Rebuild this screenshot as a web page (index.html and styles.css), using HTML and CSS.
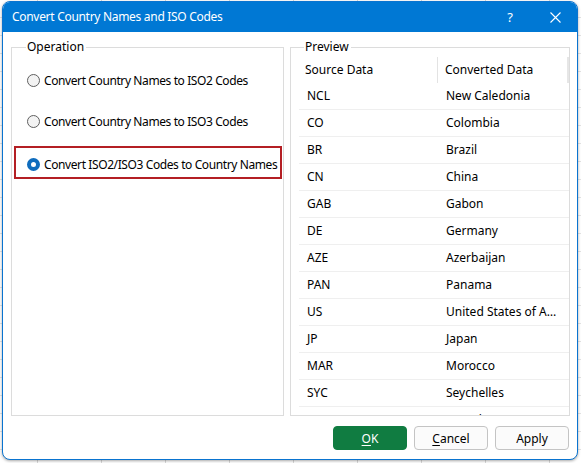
FILE: index.html
```html
<!DOCTYPE html>
<html>
<head>
<meta charset="utf-8">
<link rel="stylesheet" href="styles.css">
</head>
<body>
<div class="window">
  <div class="titlebar">
    <span class="title">Convert Country Names and ISO Codes</span>
    <span class="tb-btn help">?</span>
    <span class="tb-btn close"><svg width="11" height="11" viewBox="0 0 11 11"><path d="M0.5 0.5 L10.5 10.5 M10.5 0.5 L0.5 10.5" stroke="#fff" stroke-width="1.1" fill="none"/></svg></span>
  </div>
  <div class="body">
    <div class="groups">
      <div class="group operation">
        <span class="legend">Operation</span>
        <div class="options">
          <label class="option"><span class="radio"></span><span>Convert Country Names to ISO2 Codes</span></label>
          <label class="option"><span class="radio"></span><span>Convert Country Names to ISO3 Codes</span></label>
          <label class="option selected"><span class="radio checked"></span><span>Convert ISO2/ISO3 Codes to Country Names</span></label>
        </div>
      </div>
      <div class="group preview">
        <span class="legend">Preview</span>
        <div class="table">
          <div class="thead">
            <div class="th c1">Source Data</div>
            <div class="th c2">Converted Data</div>
          </div>
          <div class="tr"><div class="td c1">NCL</div><div class="td c2">New Caledonia</div></div>
          <div class="tr"><div class="td c1">CO</div><div class="td c2">Colombia</div></div>
          <div class="tr"><div class="td c1">BR</div><div class="td c2">Brazil</div></div>
          <div class="tr"><div class="td c1">CN</div><div class="td c2">China</div></div>
          <div class="tr"><div class="td c1">GAB</div><div class="td c2">Gabon</div></div>
          <div class="tr"><div class="td c1">DE</div><div class="td c2">Germany</div></div>
          <div class="tr"><div class="td c1">AZE</div><div class="td c2">Azerbaijan</div></div>
          <div class="tr"><div class="td c1">PAN</div><div class="td c2">Panama</div></div>
          <div class="tr"><div class="td c1">US</div><div class="td c2">United States of America</div></div>
          <div class="tr"><div class="td c1">JP</div><div class="td c2">Japan</div></div>
          <div class="tr"><div class="td c1">MAR</div><div class="td c2">Morocco</div></div>
          <div class="tr"><div class="td c1">SYC</div><div class="td c2">Seychelles</div></div>
          <div class="tr"><div class="td c1">CAN</div><div class="td c2">Canada</div></div>
        </div>
      </div>
    </div>
    <div class="buttons">
      <button class="btn primary"><u>O</u>K</button>
      <button class="btn"><u>C</u>ancel</button>
      <button class="btn">Apply</button>
    </div>
  </div>
</div>
</body>
</html>
```

FILE: styles.css
```css
html, body {
  margin: 0;
  padding: 0;
}
body {
  width: 581px;
  height: 463px;
  overflow: hidden;
  background-color: #ffffff;
  background-image:
    repeating-linear-gradient(to right, transparent 0, transparent 37px, #d9d9d9 37px, #d9d9d9 38px, transparent 38px, transparent 64px),
    repeating-linear-gradient(to bottom, transparent 0, transparent 17px, #e3e3e3 17px, #e3e3e3 18px);
  font-family: "Noto Sans", "Open Sans", sans-serif;
  font-size: 12px;
  color: #000;
}
.window {
  box-sizing: border-box;
  margin: 1px 0 0 2px;
  width: 576px;
  height: 459px;
  border: 1px solid #0a74d0;
  border-radius: 8px;
  background: #fff;
  overflow: hidden;
  box-shadow: 0 1px 3px rgba(0,0,0,0.35);
}
.titlebar {
  height: 30px;
  background: #0078d4;
  color: #fff;
  display: flex;
  align-items: center;
  padding-left: 9px;
}
.title {
  flex: 1;
  font-size: 12px;
  letter-spacing: -0.3px;
  padding-bottom: 1px;
}
.tb-btn {
  display: flex;
  align-items: center;
  justify-content: center;
  height: 30px;
}
.help {
  font-size: 13px;
  width: 46px;
  padding-bottom: 1px;
}
.close {
  width: 44px;
}
.body {
  padding: 15px 7px 0 8px;
}
.groups {
  display: flex;
  gap: 6px;
  height: 369px;
}
.group {
  position: relative;
  box-sizing: border-box;
  border: 1px solid #dcdcdc;
  height: 369px;
}
.legend {
  position: absolute;
  top: -9px;
  background: #fff;
  padding: 0 2px 0 1px;
  line-height: 16px;
  font-size: 12px;
}
.operation {
  width: 273px;
}
.operation .legend {
  left: 14px;
}
.preview {
  width: 280px;
}
.preview .legend {
  left: 13px;
}
.options {
  display: flex;
  flex-direction: column;
  gap: 8px;
  padding: 16px 1px 0 2px;
}
.option {
  box-sizing: border-box;
  height: 33px;
  border: 2px solid transparent;
  display: flex;
  align-items: center;
  padding-left: 11px;
  gap: 4px;
  font-size: 12px;
  letter-spacing: -0.4px;
  white-space: nowrap;
}
.option.selected {
  border-color: #b41f24;
  padding-top: 3px;
}
.radio {
  box-sizing: border-box;
  width: 13px;
  height: 13px;
  border-radius: 50%;
  border: 1px solid #5f5f5f;
  background: #f3f3f3;
  flex: none;
}
.radio.checked {
  border: 4px solid #0f6cbd;
  background: #fff;
}
.table {
  margin: 9px 0 0 8px;
  height: 358px;
  overflow: hidden;
}
.thead {
  display: flex;
  height: 26px;
  align-items: stretch;
}
.th {
  display: flex;
  align-items: center;
  box-sizing: border-box;
  padding-bottom: 2px;
}
.thead .c1 {
  width: 139px;
  padding-left: 6px;
  border-right: 1px solid #e3e3e3;
}
.thead .c2 {
  flex: 1;
  padding-left: 7px;
  border-right: 2px solid #e6e6e6;
}
.tr {
  display: flex;
  height: 27px;
  box-sizing: border-box;
  border-bottom: 1px solid #efefef;
  align-items: center;
  padding-bottom: 2px;
}
.td {
  box-sizing: border-box;
  white-space: nowrap;
  overflow: hidden;
  text-overflow: ellipsis;
}
.tr .c1 {
  width: 139px;
  padding-left: 8px;
}
.tr .c2 {
  flex: 1;
  padding-left: 8px;
  padding-right: 4px;
}
.buttons {
  display: flex;
  justify-content: flex-end;
  gap: 7px;
  margin-top: 10px;
  padding-right: 1px;
}
.btn {
  box-sizing: border-box;
  width: 74px;
  height: 24px;
  border: 1px solid #c4c4c4;
  border-radius: 4px;
  background: #fbfbfb;
  font-family: "Noto Sans", "Open Sans", sans-serif;
  font-size: 12px;
  color: #000;
  padding: 0;
}
.btn.primary {
  background: #107c41;
  border-color: #107c41;
  color: #fff;
}
.btn u {
  text-underline-offset: 2px;
}
```
